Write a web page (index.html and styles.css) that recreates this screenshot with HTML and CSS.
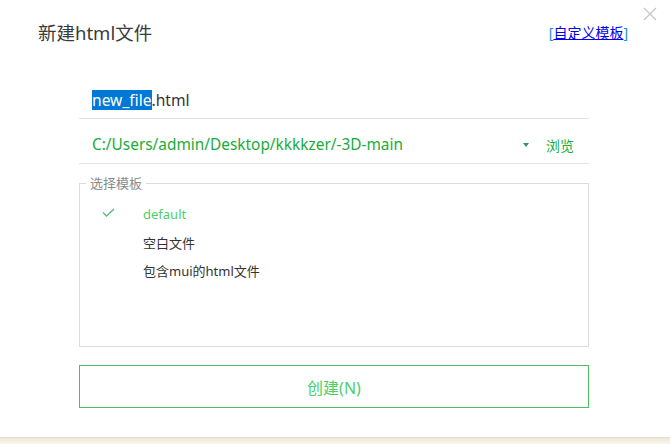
FILE: index.html
```html
<!DOCTYPE html>
<html lang="zh-CN">
<head>
    <meta charset="UTF-8">
    <title>新建html文件</title>
    <link rel="stylesheet" href="styles.css">
</head>
<body>
    <div class="dialog">
        <span class="close">
            <svg width="14" height="14" viewBox="0 0 14 14">
                <path d="M1 1 L13 13 M13 1 L1 13" stroke="#c4c4c4" stroke-width="1.2" fill="none"/>
            </svg>
        </span>

        <div class="header">
            <h1 class="title">新建html文件</h1>
            <span class="custom"><span class="bracket">[</span><a href="#">自定义模板</a><span class="bracket">]</span></span>
        </div>

        <div class="form">
            <div class="row name-row">
                <span class="selected">new_file</span>.html
            </div>

            <div class="row path-row">
                <span class="path">C:/Users/admin/Desktop/kkkkzer/-3D-main</span>
                <span class="caret"></span>
                <span class="browse">浏览</span>
            </div>

            <fieldset class="templates">
                <legend>选择模板</legend>
                <ul class="template-list">
                    <li class="active">
                        <span class="check">
                            <svg width="13" height="9" viewBox="0 0 13 9">
                                <path d="M1 4.5 L4.5 8 L12 1" stroke="#5bbd78" stroke-width="1.4" fill="none"/>
                            </svg>
                        </span>
                        default
                    </li>
                    <li><span class="check"></span>空白文件</li>
                    <li><span class="check"></span>包含mui的html文件</li>
                </ul>
            </fieldset>

            <button class="create">创建(N)</button>
        </div>
    </div>
    <div class="footer"></div>
</body>
</html>
```

FILE: styles.css
```css
body {
    margin: 0;
    width: 670px;
    height: 444px;
    overflow: hidden;
    font-family: "Noto Sans", "Noto Sans CJK SC", sans-serif;
    color: #333;
    background: #fff;
}

.dialog {
    position: relative;
    height: 437px;
    background: #fff;
}

.close {
    position: absolute;
    top: 7px;
    right: 13px;
    width: 14px;
    height: 14px;
}

.close svg {
    display: block;
}

.header {
    display: flex;
    justify-content: space-between;
    align-items: center;
    padding: 22px 42px 0 38px;
    height: 22px;
}

.title {
    margin: 0;
    font-size: 18.5px;
    font-weight: normal;
    line-height: 22px;
    color: #3a3a3a;
}

.custom {
    font-size: 14px;
    line-height: 22px;
}

.custom .bracket {
    color: #1a8fe0;
}

.custom a {
    color: #0000ee;
}

.form {
    width: 510px;
    margin: 30px 0 0 79px;
}

.row {
    display: flex;
    align-items: center;
    box-sizing: border-box;
    height: 45px;
    padding: 7px 15px 0 13px;
    border-bottom: 1px solid #e2e2e2;
}

.name-row {
    font-size: 15.6px;
    color: #333;
}

.selected {
    display: inline-block;
    line-height: 20px;
    background: #0078d7;
    color: #fff;
}

.path-row {
    font-size: 15.4px;
    color: #1aab3a;
}

.path {
    flex: 1;
}

.caret {
    width: 0;
    height: 0;
    border-left: 3px solid transparent;
    border-right: 3px solid transparent;
    border-top: 4px solid #2a9d55;
    margin: 0 17px 0 0;
}

.browse {
    font-size: 14px;
}

.templates {
    margin: 11px 0 0;
    padding: 0;
    border: 1px solid #dcdcdc;
}

.templates legend {
    margin-left: 6px;
    padding: 0 4px;
    font-size: 13px;
    line-height: 16px;
    color: #8a8a8a;
}

.template-list {
    list-style: none;
    margin: 0;
    padding: 9px 0 0;
    height: 155px;
    box-sizing: border-box;
}

.template-list li {
    display: flex;
    align-items: center;
    height: 28px;
    font-size: 13px;
    color: #333;
}

.template-list li.active {
    color: #4ccf69;
}

.check {
    width: 41px;
    padding-left: 22px;
    display: flex;
    align-items: center;
    margin-top: -4px;
}

.create {
    display: block;
    width: 510px;
    height: 43px;
    margin-top: 18px;
    border: 1px solid #4dbf5d;
    background: #fff;
    color: #4ccf69;
    font-family: "Noto Sans", "Noto Sans CJK SC", sans-serif;
    font-size: 16px;
    cursor: pointer;
}

.footer {
    height: 6px;
    border-top: 1px solid #dddddd;
    background: linear-gradient(#efe9d6, #faf6e8);
}
```
